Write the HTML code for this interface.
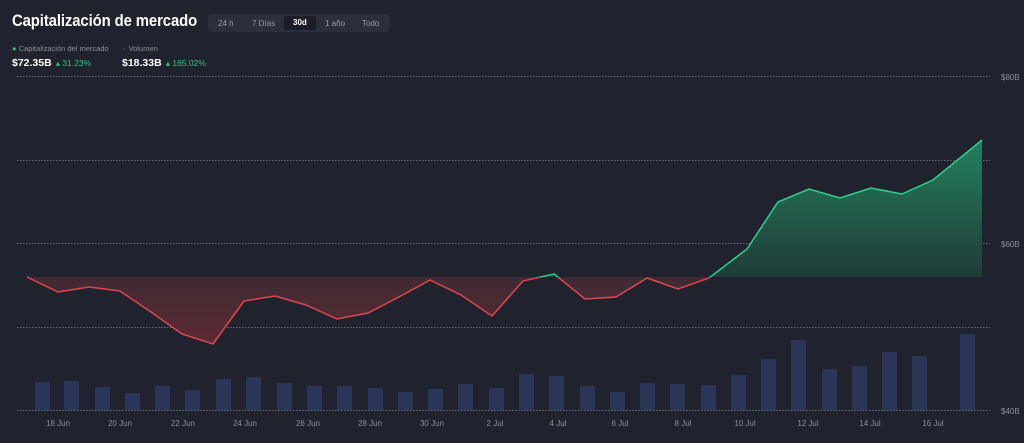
<!DOCTYPE html>
<html><head><meta charset="utf-8"><style>
body{margin:0;width:1024px;height:443px;background:#20222d;font-family:"Liberation Sans",sans-serif;overflow:hidden;position:relative;color:#fff}
.t{position:absolute;left:12px;top:12px;font-size:16.5px;font-weight:bold;transform:scaleX(0.9);transform-origin:0 0;white-space:nowrap;letter-spacing:-0.1px}
.tabs{position:absolute;left:208px;top:14px;width:182px;height:18px;background:#2b2e3b;border-radius:4px;font-size:8px;color:#9a9ca8}
.tabs span{position:absolute;top:5px}
.tabs .a{background:#1c1d26;color:#fff;font-weight:bold;top:2px;height:14px;line-height:14px;padding:0 9px;border-radius:3px}
.lg{position:absolute;top:44px;font-size:7.5px;color:#8d8f9c}
.v{position:absolute;top:57px;font-size:10.5px;font-weight:bold}
.v i{font-style:normal;color:#2ec27e;font-weight:normal;font-size:8.5px;margin-left:4px}
</style></head><body>
<div class="t">Capitalización de mercado</div>
<div class="tabs"><span style="left:10px">24 h</span><span style="left:44px">7 Días</span><span class="a" style="left:76px">30d</span><span style="left:117px">1 año</span><span style="left:154px">Todo</span></div>
<div class="lg" style="left:12px"><span style="color:#2ec27e">●</span> Capitalización del mercado</div>
<div class="lg" style="left:122px"><span style="color:#2d3550">●</span> Volumen</div>
<div class="v" style="left:12px">$72.35B<i>▴ 31.23%</i></div>
<div class="v" style="left:122px">$18.33B<i>▴ 165.02%</i></div>
<svg width="1024" height="443" style="position:absolute;left:0;top:0">
<defs>
<linearGradient id="g" x1="0" y1="140" x2="0" y2="277" gradientUnits="userSpaceOnUse"><stop offset="0" stop-color="#23805c"/><stop offset="1" stop-color="#203b38"/></linearGradient>
<linearGradient id="r" x1="0" y1="277" x2="0" y2="344" gradientUnits="userSpaceOnUse"><stop offset="0" stop-color="#3e2a33"/><stop offset="1" stop-color="#5e2a33"/></linearGradient>
<clipPath id="above"><rect x="0" y="0" width="1024" height="277"/></clipPath>
<clipPath id="below"><rect x="0" y="277" width="1024" height="200"/></clipPath>
</defs>
<g stroke="#6a6d7a" stroke-dasharray="1.5 1.5" stroke-width="1">
<line x1="17" y1="76.5" x2="990" y2="76.5"/><line x1="17" y1="160.5" x2="990" y2="160.5"/><line x1="17" y1="243.5" x2="990" y2="243.5"/><line x1="17" y1="327.5" x2="990" y2="327.5"/><line x1="17" y1="410.5" x2="990" y2="410.5"/>
</g>
<g fill="#2a3558">
<rect x="35" y="382" width="15" height="28"/><rect x="64" y="381" width="15" height="29"/><rect x="95" y="387" width="15" height="23"/><rect x="125" y="393" width="15" height="17"/><rect x="155" y="386" width="15" height="24"/><rect x="185" y="390" width="15" height="20"/><rect x="216" y="379" width="15" height="31"/><rect x="246" y="377" width="15" height="33"/><rect x="277" y="383" width="15" height="27"/><rect x="307" y="386" width="15" height="24"/><rect x="337" y="386" width="15" height="24"/><rect x="368" y="388" width="15" height="22"/><rect x="398" y="392" width="15" height="18"/><rect x="428" y="389" width="15" height="21"/><rect x="458" y="384" width="15" height="26"/><rect x="489" y="388" width="15" height="22"/><rect x="519" y="374" width="15" height="36"/><rect x="549" y="376" width="15" height="34"/><rect x="580" y="386" width="15" height="24"/><rect x="610" y="392" width="15" height="18"/><rect x="640" y="383" width="15" height="27"/><rect x="670" y="384" width="15" height="26"/><rect x="701" y="385" width="15" height="25"/><rect x="731" y="375" width="15" height="35"/><rect x="761" y="359" width="15" height="51"/><rect x="791" y="340" width="15" height="70"/><rect x="822" y="369" width="15" height="41"/><rect x="852" y="366" width="15" height="44"/><rect x="882" y="352" width="15" height="58"/><rect x="912" y="356" width="15" height="54"/><rect x="960" y="334" width="15" height="76"/>
</g>
<g>
<path clip-path="url(#below)" fill="url(#r)" d="M27,277 L58,292 L89,287 L120,291 L151,312 L182,334 L213,344 L244,301 L275,296 L306,305 L337,319 L368,313 L399,297 L430,280 L461,295 L492,316 L523,281 L554,274 L585,299 L616,297 L647,278 L678,289 L709,278 L747,249 L778,202 L809,189 L840,198 L871,188 L902,194 L933,180 L982,140 L982,277 Z"/>
<path clip-path="url(#above)" fill="url(#g)" d="M27,277 L58,292 L89,287 L120,291 L151,312 L182,334 L213,344 L244,301 L275,296 L306,305 L337,319 L368,313 L399,297 L430,280 L461,295 L492,316 L523,281 L554,274 L585,299 L616,297 L647,278 L678,289 L709,278 L747,249 L778,202 L809,189 L840,198 L871,188 L902,194 L933,180 L982,140 L982,277 Z"/>
<path clip-path="url(#below)" fill="none" stroke="#e0454f" stroke-width="1.5" d="M27,277 L58,292 L89,287 L120,291 L151,312 L182,334 L213,344 L244,301 L275,296 L306,305 L337,319 L368,313 L399,297 L430,280 L461,295 L492,316 L523,281 L554,274 L585,299 L616,297 L647,278 L678,289 L709,278 L747,249"/>
<path clip-path="url(#above)" fill="none" stroke="#2fd08e" stroke-width="1.5" d="M27,277 L58,292 L89,287 L120,291 L151,312 L182,334 L213,344 L244,301 L275,296 L306,305 L337,319 L368,313 L399,297 L430,280 L461,295 L492,316 L523,281 L554,274 L585,299 L616,297 L647,278 L678,289 L709,278 L747,249 L778,202 L809,189 L840,198 L871,188 L902,194 L933,180 L982,140"/>
</g>
<g fill="#8d8f9c" font-size="8" font-family="Liberation Sans,sans-serif">
<text x="1001" y="80">$80B</text><text x="1001" y="247">$60B</text><text x="1001" y="414">$40B</text>
</g>
<g fill="#8d8f9c" font-size="8" font-family="Liberation Sans,sans-serif" text-anchor="middle">
<text x="58" y="426">18 Jun</text><text x="120" y="426">20 Jun</text><text x="183" y="426">22 Jun</text><text x="245" y="426">24 Jun</text><text x="308" y="426">26 Jun</text><text x="370" y="426">28 Jun</text><text x="432" y="426">30 Jun</text><text x="495" y="426">2 Jul</text><text x="558" y="426">4 Jul</text><text x="620" y="426">6 Jul</text><text x="683" y="426">8 Jul</text><text x="745" y="426">10 Jul</text><text x="808" y="426">12 Jul</text><text x="870" y="426">14 Jul</text><text x="933" y="426">16 Jul</text>
</g>
</svg>
</body></html>
